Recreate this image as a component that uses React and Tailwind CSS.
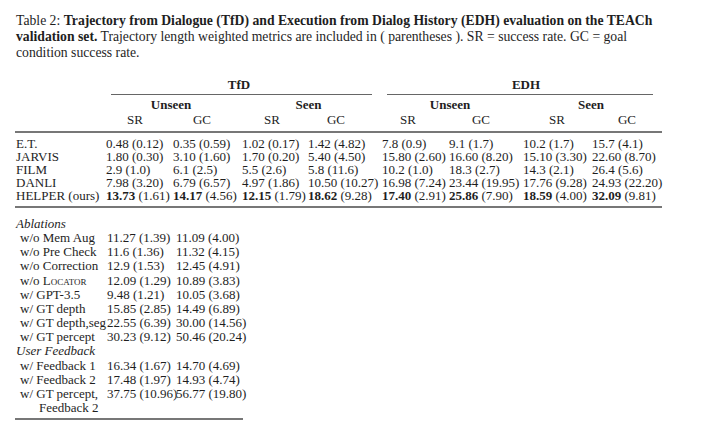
import React from "react";

const rows = [
  ["E.T.", ["0.48", "(0.12)"], ["0.35", "(0.59)"], ["1.02", "(0.17)"], ["1.42", "(4.82)"], ["7.8", "(0.9)"], ["9.1", "(1.7)"], ["10.2", "(1.7)"], ["15.7", "(4.1)"]],
  ["JARVIS", ["1.80", "(0.30)"], ["3.10", "(1.60)"], ["1.70", "(0.20)"], ["5.40", "(4.50)"], ["15.80", "(2.60)"], ["16.60", "(8.20)"], ["15.10", "(3.30)"], ["22.60", "(8.70)"]],
  ["FILM", ["2.9", "(1.0)"], ["6.1", "(2.5)"], ["5.5", "(2.6)"], ["5.8", "(11.6)"], ["10.2", "(1.0)"], ["18.3", "(2.7)"], ["14.3", "(2.1)"], ["26.4", "(5.6)"]],
  ["DANLI", ["7.98", "(3.20)"], ["6.79", "(6.57)"], ["4.97", "(1.86)"], ["10.50", "(10.27)"], ["16.98", "(7.24)"], ["23.44", "(19.95)"], ["17.76", "(9.28)"], ["24.93", "(22.20)"]],
];

const helper = [["13.73", "(1.61)"], ["14.17", "(4.56)"], ["12.15", "(1.79)"], ["18.62", "(9.28)"], ["17.40", "(2.91)"], ["25.86", "(7.90)"], ["18.59", "(4.00)"], ["32.09", "(9.81)"]];

// header widths centre SR / GC over each column's numbers
const subHeads = [
  ["SR", "w-[58px]"],
  ["GC", "w-[58px]"],
  ["SR", "w-[60px]"],
  ["GC", "w-[56px]"],
  ["SR", "w-[52px]"],
  ["GC", "w-[64px]"],
  ["SR", "w-[68px]"],
  ["GC", "w-[70px]"],
];

const ablations = [
  ["w/o Mem Aug", "11.27 (1.39)", "11.09 (4.00)"],
  ["w/o Pre Check", "11.6 (1.36)", "11.32 (4.15)"],
  ["w/o Correction", "12.9 (1.53)", "12.45 (4.91)"],
  ["locator", "12.09 (1.29)", "10.89 (3.83)"],
  ["w/ GPT-3.5", "9.48 (1.21)", "10.05 (3.68)"],
  ["w/ GT depth", "15.85 (2.85)", "14.49 (6.89)"],
  ["w/ GT depth,seg", "22.55 (6.39)", "30.00 (14.56)"],
  ["w/ GT percept", "30.23 (9.12)", "50.46 (20.24)"],
];

const feedback = [
  ["w/ Feedback 1", "16.34 (1.67)", "14.70 (4.69)"],
  ["w/ Feedback 2", "17.48 (1.97)", "14.93 (4.74)"],
];

const grid = "grid grid-cols-[91px_67px_69px_66px_74px_67px_74px_69px_70px]";

export default function App() {
  return (
    <div className="w-[728px] h-[428px] bg-white text-[#1e1e1e] font-['Liberation_Serif',serif] overflow-hidden">
      {/* Caption */}
      <div className="pt-[13px] pl-[16px] text-[13.7px] leading-[16px] whitespace-nowrap">
        Table 2: <b>Trajectory from Dialogue (TfD) and Execution from Dialog History (EDH) evaluation on the TEACh</b>
        <br />
        <b>validation set.</b> Trajectory length weighted metrics are included in ( parentheses ). SR = success rate. GC = goal
        <br />
        condition success rate.
      </div>

      {/* Main table */}
      <div className="ml-[15px] w-[647px] mt-[17px] text-[13px] whitespace-nowrap">
        <div className={`${grid} h-[14px] leading-[14px] font-bold`}>
          <div />
          <div className="col-span-4 w-[266px] text-center">TfD</div>
          <div className="col-span-4 pl-[8px] text-center">EDH</div>
        </div>
        <div className={`${grid} mt-[2px]`}>
          <div />
          <div className="col-span-4 ml-[5px] mr-[10px] h-px bg-[#666]" />
          <div className="col-span-4 ml-[5px] mr-[9px] h-px bg-[#666]" />
        </div>
        <div className={`${grid} mt-[3px] h-[15px] leading-[14px] font-bold`}>
          <div />
          <div className="col-span-2 w-[130px] text-center">Unseen</div>
          <div className="col-span-2 w-[133px] text-center">Seen</div>
          <div className="col-span-2 w-[136px] text-center">Unseen</div>
          <div className="col-span-2 w-[136px] text-center">Seen</div>
        </div>
        <div className={`${grid} h-[14px] leading-[14px]`}>
          <div />
          {subHeads.map(([t, w], i) => (
            <div key={i} className={`${w} text-center`}>
              {t}
            </div>
          ))}
        </div>
        <div className="mt-[4px] h-[2px] bg-[#777]" />
        <div className="mt-[3.5px] leading-[13.2px]">
          {rows.map((r) => (
            <div key={r[0]} className={grid}>
              <div className="pl-px">{r[0]}</div>
              {r.slice(1).map(([a, b], i) => (
                <div key={i}>
                  {a} {b}
                </div>
              ))}
            </div>
          ))}
          <div className={grid}>
            <div className="pl-px">HELPER (ours)</div>
            {helper.map(([a, b], i) => (
              <div key={i}>
                <b>{a}</b> {b}
              </div>
            ))}
          </div>
        </div>
        <div className="mt-[3px] h-[2px] bg-[#777]" />
      </div>

      {/* Ablations table */}
      <div className="ml-[15px] w-[228px] mt-[9.5px] text-[13px] leading-[14.15px] whitespace-nowrap">
        <div className="pl-px italic">Ablations</div>
        {ablations.map(([l, a, b]) => (
          <div key={l} className="grid grid-cols-[92px_69px_67px]">
            <div className="pl-[5px]">
              {l === "locator" ? (
                <>
                  w/o <span className="[font-variant:small-caps]">Locator</span>
                </>
              ) : (
                l
              )}
            </div>
            <div>{a}</div>
            <div>{b}</div>
          </div>
        ))}
        <div className="pl-px italic">User Feedback</div>
        {feedback.map(([l, a, b]) => (
          <div key={l} className="grid grid-cols-[92px_69px_67px]">
            <div className="pl-[5px]">{l}</div>
            <div>{a}</div>
            <div>{b}</div>
          </div>
        ))}
        <div className="grid grid-cols-[92px_69px_67px]">
          <div className="pl-[5px]">w/ GT percept,</div>
          <div>37.75 (10.96)</div>
          <div>56.77 (19.80)</div>
        </div>
        <div className="pl-[24px]">Feedback 2</div>
        <div className="mt-[3px] h-[2px] bg-[#777]" />
      </div>
    </div>
  );
}
